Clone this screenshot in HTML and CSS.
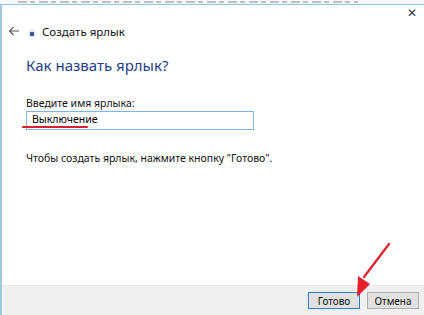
FILE: index.html
```html
<!DOCTYPE html>
<html lang="ru">

<head>
    <meta charset="UTF-8" />
    <title>Создать ярлык</title>
    <link rel="stylesheet" href="styles.css">
</head>

<body>
    <!-- strip of the page behind the dialog -->
    <div class="backdrop"></div>
    <div class="window">
        <div class="titlebar">
            <span class="close">&#x2715;</span>
        </div>
        <div class="header">
            <svg class="back" width="12" height="10" viewBox="0 0 12 10">
                <path d="M11 5H1.5M5.5 1L1.5 5l4 4" fill="none" stroke="#555" stroke-width="1.1" />
            </svg>
            <svg class="app-icon" width="6" height="7" viewBox="0 0 6 7">
                <rect x="0" y="0" width="6" height="7" fill="#dfe6f2" />
                <rect x="1" y="2" width="4" height="4" fill="#3b5b9a" />
            </svg>
            <span class="title">Создать ярлык</span>
        </div>

        <div class="content">
            <h1>Как назвать ярлык?</h1>
            <label class="field-label" for="shortcutName">Введите имя ярлыка:</label>
            <div class="field">
                <input type="text" id="shortcutName" value="Выключение">
                <span class="mark"></span>
            </div>
            <p class="hint">Чтобы создать ярлык, нажмите кнопку "Готово".</p>
        </div>

        <div class="footer">
            <button type="button" class="btn btn-default">Готово</button>
            <button type="button" class="btn">Отмена</button>
            <svg class="pointer" width="50" height="60" viewBox="0 0 50 60">
                <path d="M43 2L18 35" stroke="#e5202a" stroke-width="2.2" stroke-linecap="round" />
                <polygon points="12,34 24,42 11,55" fill="#e5202a" />
            </svg>
        </div>
    </div>
</body>

</html>
```

FILE: styles.css
```css
body {
    margin: 0;
    width: 424px;
    height: 315px;
    overflow: hidden;
    font-family: "Segoe UI", "Noto Sans", "Liberation Sans", Arial, sans-serif;
    background-color: #ffffff;
}

.backdrop {
    height: 4px;
    background-color: #f6f8f9;
    background-image: repeating-linear-gradient(90deg, #b9c2c8 0 9px, transparent 9px 12px, #b9c2c8 12px 17px, transparent 17px 21px);
    background-size: 340px 2px;
    background-position: 18px 1px;
    background-repeat: no-repeat;
}

.window {
    position: relative;
    height: 311px;
    border-top: 1px solid #8fc6da;
    border-left: 2px solid #9ccadb;
    box-sizing: border-box;
    display: flex;
    flex-direction: column;
    background-color: #ffffff;
}

.titlebar {
    height: 16px;
    display: flex;
    justify-content: flex-end;
}

.close {
    font-size: 12px;
    line-height: 14px;
    color: #333;
    padding-right: 7px;
    padding-top: 1px;
}

.header {
    display: flex;
    align-items: center;
    height: 20px;
    padding-left: 6px;
}

.back {
    margin-right: 9px;
}

.app-icon {
    margin-top: 4px;
    margin-right: 7px;
}

.title {
    font-size: 11.5px;
    color: #111;
}

.content {
    flex: 1;
    padding-left: 24px;
}

.content h1 {
    margin: 15px 0 0;
    font-size: 15px;
    font-weight: normal;
    color: #1e3f89;
    line-height: 18px;
}

.field-label {
    display: block;
    margin-top: 23px;
    font-size: 10.5px;
    line-height: 13px;
    color: #111;
}

.field {
    position: relative;
    width: 228px;
    margin-top: 1px;
}

.field input {
    display: block;
    width: 228px;
    height: 19px;
    box-sizing: border-box;
    border: 1px solid #7eb4ea;
    padding: 0 5px 3px;
    font-family: inherit;
    font-size: 10.5px;
    color: #000;
    outline: none;
}

.mark {
    position: absolute;
    left: -4px;
    top: 15px;
    width: 66px;
    height: 2px;
    border-radius: 1px;
    background-color: #d9202a;
}

.hint {
    margin: 21px 0 0;
    font-size: 10.5px;
    color: #111;
}

.footer {
    position: relative;
    height: 29px;
    background-color: #f0f0f0;
    border-top: 1px solid #e6e6e6;
    display: flex;
    justify-content: flex-end;
    align-items: center;
    gap: 7px;
    padding-right: 5px;
}

.btn {
    width: 52px;
    height: 17px;
    padding: 0;
    font-family: inherit;
    font-size: 10px;
    color: #111;
    background-color: #e1e1e1;
    border: 1px solid #adadad;
}

.btn-default {
    border-color: #2b7fd4;
}

.pointer {
    position: absolute;
    right: 28px;
    bottom: 13px;
}
```
